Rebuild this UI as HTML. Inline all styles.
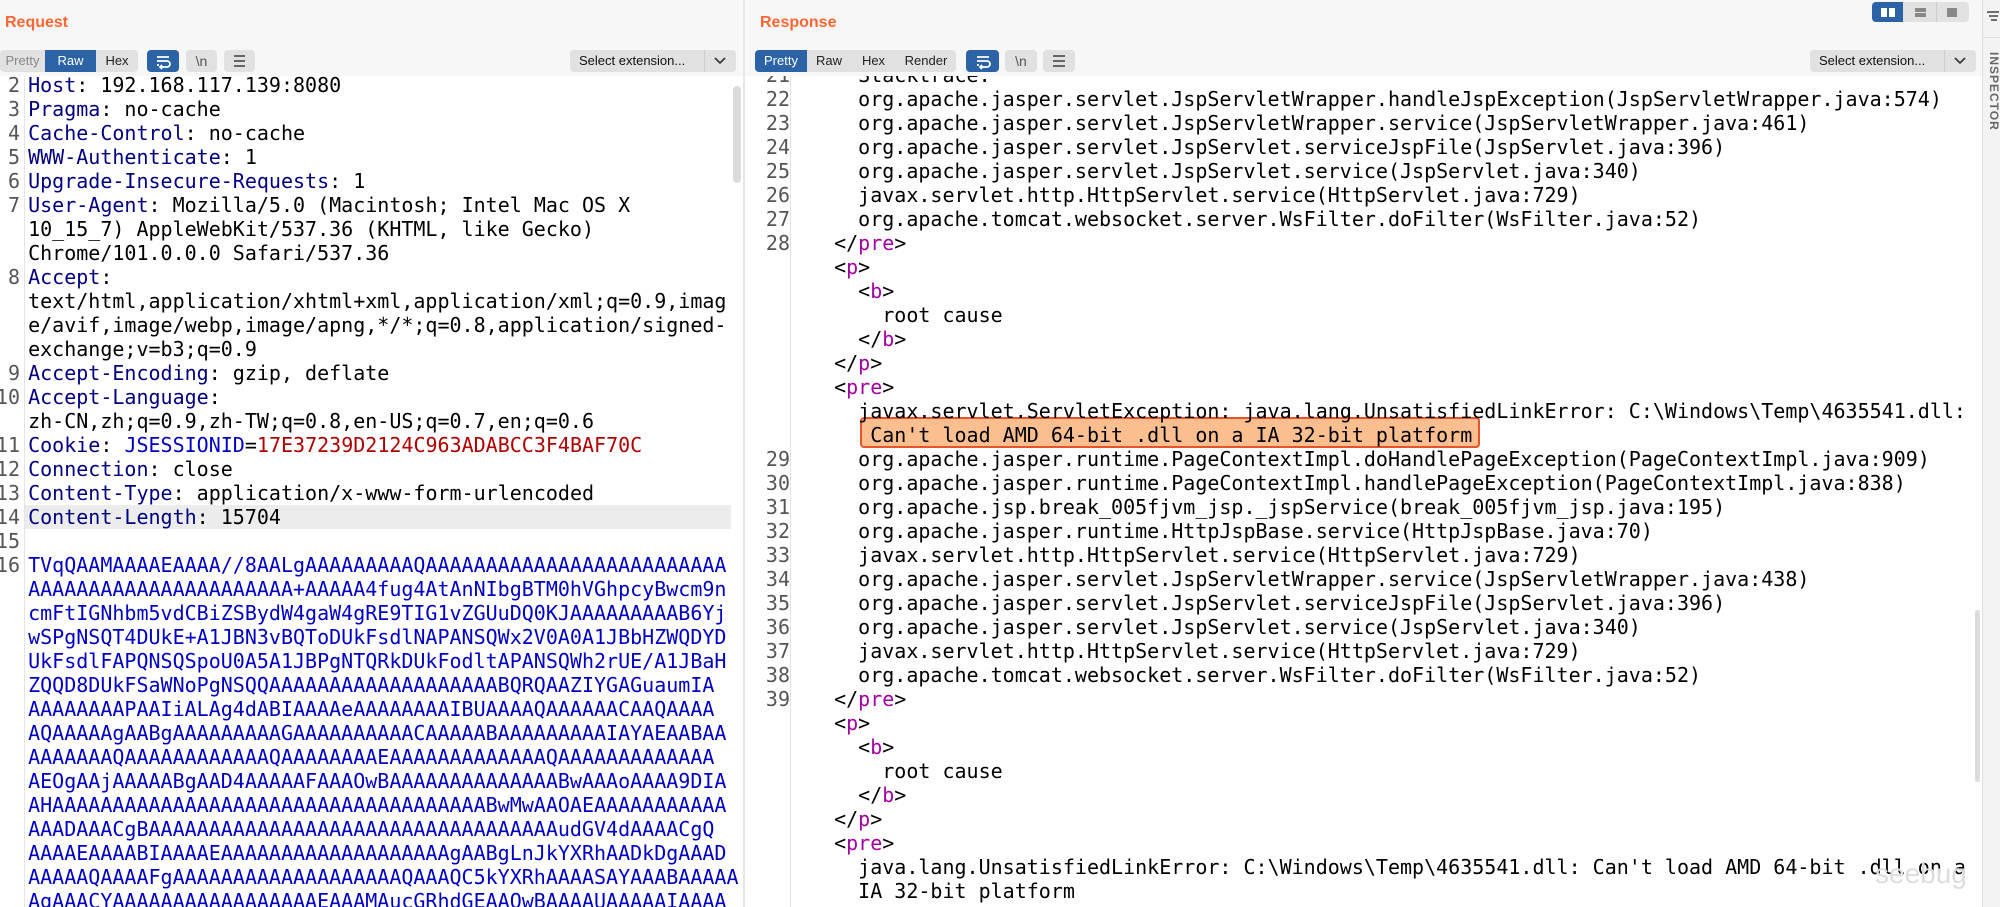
<!DOCTYPE html>
<html><head><meta charset="utf-8"><style>
*{margin:0;padding:0;box-sizing:border-box}
body{width:2000px;height:907px;overflow:hidden;background:#f7f7f7;position:relative;font-family:"Liberation Sans",sans-serif}
.hdr{position:absolute;top:14px;color:#ff6633;font-size:16px;font-weight:bold}
.btn{position:absolute;top:50px;height:22px;font-size:13px;line-height:22px;text-align:center;color:#222;background:#e1e1e1}
.sel{background:#2b63a6;color:#fff}
.ib{position:absolute;top:50px;height:22px;border-radius:4px;background:#e1e1e1}
.ib.sel{background:#2b63a6}
.ext{position:absolute;top:50px;height:22px;background:#e1e1e1;border-radius:4px;font-size:13px;line-height:22px;color:#111}
.ed{position:absolute;top:76px;height:831px;background:#fff;overflow:hidden}
.code{position:absolute;right:0;font-family:"DejaVu Sans Mono","Liberation Mono",monospace;font-size:20px;line-height:24px}
.r{height:24px;position:relative;white-space:pre}
.n{position:absolute;color:#555;text-align:right}
.k{color:#000080}.b{color:#0000c4}.red{color:#b00000}.t{color:#a400a4}
</style></head><body>

<div class="hdr" style="left:5px">Request</div>
<div class="btn" style="left:0;width:45px;color:#888;border-radius:4px 0 0 4px">Pretty</div>
<div class="btn sel" style="left:45px;width:51px">Raw</div>
<div class="btn" style="left:96px;width:42px;border-radius:0 4px 4px 0">Hex</div>
<div class="ib sel" style="left:147px;width:32px"><svg width="32" height="22"><path d="M10 7h12M10 11h10a3 3 0 0 1 0 6h-6M10 15h2M15 15l-2 2 2 2" stroke="#fff" stroke-width="1.8" fill="none"/></svg></div>
<div class="ib" style="left:186px;width:31px;font-size:14px;line-height:22px;text-align:center;color:#555">\n</div>
<div class="ib" style="left:224px;width:31px"><svg width="31" height="22"><path d="M10 6h11M10 11h11M10 16h11" stroke="#666" stroke-width="2"/></svg></div>
<div class="ext" style="left:570px;width:166px"><span style="padding-left:9px">Select extension...</span><span style="position:absolute;left:134px;top:0;width:1px;height:22px;background:#ccc"></span><svg style="position:absolute;left:143px;top:6px" width="14" height="10"><path d="M2 2l5 5 5-5" stroke="#333" stroke-width="1.6" fill="none"/></svg></div>

<div class="ed" style="left:0;width:743px">
<div style="position:absolute;left:24px;top:0;width:1px;height:831px;background:#e4e4e4"></div>
<div style="position:absolute;left:25px;top:429px;width:706px;height:24px;background:#ececec"></div>
<div style="position:absolute;left:733px;top:10px;width:8px;height:97px;border-radius:4px;background:#dcdcdc"></div>
<div class="code" style="top:-3px;left:4px">
<div class="r"><span class="n" style="left:-44px;width:60px">2</span>  <span class="k">Host</span>: 192.168.117.139:8080</div>
<div class="r"><span class="n" style="left:-44px;width:60px">3</span>  <span class="k">Pragma</span>: no-cache</div>
<div class="r"><span class="n" style="left:-44px;width:60px">4</span>  <span class="k">Cache-Control</span>: no-cache</div>
<div class="r"><span class="n" style="left:-44px;width:60px">5</span>  <span class="k">WWW-Authenticate</span>: 1</div>
<div class="r"><span class="n" style="left:-44px;width:60px">6</span>  <span class="k">Upgrade-Insecure-Requests</span>: 1</div>
<div class="r"><span class="n" style="left:-44px;width:60px">7</span>  <span class="k">User-Agent</span>: Mozilla/5.0 (Macintosh; Intel Mac OS X</div>
<div class="r">  10_15_7) AppleWebKit/537.36 (KHTML, like Gecko)</div>
<div class="r">  Chrome/101.0.0.0 Safari/537.36</div>
<div class="r"><span class="n" style="left:-44px;width:60px">8</span>  <span class="k">Accept</span>:</div>
<div class="r">  text/html,application/xhtml+xml,application/xml;q=0.9,imag</div>
<div class="r">  e/avif,image/webp,image/apng,*/*;q=0.8,application/signed-</div>
<div class="r">  exchange;v=b3;q=0.9</div>
<div class="r"><span class="n" style="left:-44px;width:60px">9</span>  <span class="k">Accept-Encoding</span>: gzip, deflate</div>
<div class="r"><span class="n" style="left:-44px;width:60px">10</span>  <span class="k">Accept-Language</span>:</div>
<div class="r">  zh-CN,zh;q=0.9,zh-TW;q=0.8,en-US;q=0.7,en;q=0.6</div>
<div class="r"><span class="n" style="left:-44px;width:60px">11</span>  <span class="k">Cookie</span>: <span class="b">JSESSIONID</span>=<span class="red">17E37239D2124C963ADABCC3F4BAF70C</span></div>
<div class="r"><span class="n" style="left:-44px;width:60px">12</span>  <span class="k">Connection</span>: close</div>
<div class="r"><span class="n" style="left:-44px;width:60px">13</span>  <span class="k">Content-Type</span>: application/x-www-form-urlencoded</div>
<div class="r"><span class="n" style="left:-44px;width:60px">14</span>  <span class="k">Content-Length</span>: 15704</div>
<div class="r"><span class="n" style="left:-44px;width:60px">15</span></div>
<div class="b">
<div class="r"><span class="n" style="left:-44px;width:60px;color:#555">16</span>  TVqQAAMAAAAEAAAA//8AALgAAAAAAAAAQAAAAAAAAAAAAAAAAAAAAAAAAA</div>
<div class="r">  AAAAAAAAAAAAAAAAAAAAAA+AAAAA4fug4AtAnNIbgBTM0hVGhpcyBwcm9n</div>
<div class="r">  cmFtIGNhbm5vdCBiZSBydW4gaW4gRE9TIG1vZGUuDQ0KJAAAAAAAAAB6Yj</div>
<div class="r">  wSPgNSQT4DUkE+A1JBN3vBQToDUkFsdlNAPANSQWx2V0A0A1JBbHZWQDYD</div>
<div class="r">  UkFsdlFAPQNSQSpoU0A5A1JBPgNTQRkDUkFodltAPANSQWh2rUE/A1JBaH</div>
<div class="r">  ZQQD8DUkFSaWNoPgNSQQAAAAAAAAAAAAAAAAAAABQRQAAZIYGAGuaumIA</div>
<div class="r">  AAAAAAAAPAAIiALAg4dABIAAAAeAAAAAAAAIBUAAAAQAAAAAACAAQAAAA</div>
<div class="r">  AQAAAAAgAABgAAAAAAAAAGAAAAAAAAAACAAAAABAAAAAAAAAIAYAEAABAA</div>
<div class="r">  AAAAAAAQAAAAAAAAAAAAQAAAAAAAAEAAAAAAAAAAAAAQAAAAAAAAAAAAA</div>
<div class="r">  AEOgAAjAAAAABgAAD4AAAAAFAAAOwBAAAAAAAAAAAAAABwAAAoAAAA9DIA</div>
<div class="r">  AHAAAAAAAAAAAAAAAAAAAAAAAAAAAAAAAAAAAABwMwAAOAEAAAAAAAAAAA</div>
<div class="r">  AAADAAACgBAAAAAAAAAAAAAAAAAAAAAAAAAAAAAAAAAAudGV4dAAAACgQ</div>
<div class="r">  AAAAEAAAABIAAAAEAAAAAAAAAAAAAAAAAAAgAABgLnJkYXRhAADkDgAAAD</div>
<div class="r">  AAAAAQAAAAFgAAAAAAAAAAAAAAAAAAAQAAAQC5kYXRhAAAASAYAAABAAAAA</div>
<div class="r">  AgAAACYAAAAAAAAAAAAAAAAAEAAAMAucGRhdGEAAOwBAAAAUAAAAAIAAAA</div>
</div>
</div>
</div>
<div style="position:absolute;left:743px;top:0;width:2px;height:907px;background:#e6e6e6"></div>
<div style="position:absolute;left:741px;top:472px;color:#aaa;font-size:14px">⋮</div>

<div class="hdr" style="left:760px">Response</div>
<div class="btn sel" style="left:755px;width:52px;border-radius:4px 0 0 4px">Pretty</div>
<div class="btn" style="left:807px;width:44px">Raw</div>
<div class="btn" style="left:851px;width:45px">Hex</div>
<div class="btn" style="left:896px;width:60px;border-radius:0 4px 4px 0">Render</div>
<div class="ib sel" style="left:966px;width:33px"><svg width="33" height="22"><path d="M11 7h12M11 11h10a3 3 0 0 1 0 6h-6M11 15h2M16 15l-2 2 2 2" stroke="#fff" stroke-width="1.8" fill="none"/></svg></div>
<div class="ib" style="left:1005px;width:32px;font-size:14px;line-height:22px;text-align:center;color:#555">\n</div>
<div class="ib" style="left:1043px;width:32px"><svg width="32" height="22"><path d="M10 6h12M10 11h12M10 16h12" stroke="#666" stroke-width="2"/></svg></div>
<div class="ext" style="left:1810px;width:166px"><span style="padding-left:9px">Select extension...</span><span style="position:absolute;left:134px;top:0;width:1px;height:22px;background:#ccc"></span><svg style="position:absolute;left:143px;top:6px" width="14" height="10"><path d="M2 2l5 5 5-5" stroke="#333" stroke-width="1.6" fill="none"/></svg></div>
<div style="position:absolute;left:1872px;top:2px;width:97px;height:20px;border-radius:4px;background:#e1e1e1;overflow:hidden">
<div style="position:absolute;left:0;top:0;width:31px;height:20px;background:#2b63a6"></div>
<div style="position:absolute;left:9px;top:6px;width:6px;height:9px;background:#fff"></div><div style="position:absolute;left:17px;top:6px;width:6px;height:9px;background:#fff"></div>
<div style="position:absolute;left:43px;top:6px;width:11px;height:4px;background:#888"></div><div style="position:absolute;left:43px;top:11px;width:11px;height:4px;background:#888"></div>
<div style="position:absolute;left:64px;top:0;width:1px;height:20px;background:#ccc"></div>
<div style="position:absolute;left:75px;top:6px;width:10px;height:9px;background:#888"></div>
</div>

<div class="ed" style="left:745px;width:1237px">
<div style="position:absolute;left:45px;top:0;width:1px;height:831px;background:#e4e4e4"></div>
<div style="position:absolute;left:1230px;top:534px;width:5px;height:172px;border-radius:3px;background:#dcdcdc"></div>
<div style="position:absolute;left:115px;top:341px;width:620px;height:31px;background:#fbbf8f;border:2px solid #e8542a;border-radius:4px"></div>
<div class="code" style="top:-13px;left:65px">
<div class="r"><span class="n" style="left:-80px;width:60px">21</span>    Stacktrace:</div>
<div class="r"><span class="n" style="left:-80px;width:60px">22</span>    org.apache.jasper.servlet.JspServletWrapper.handleJspException(JspServletWrapper.java:574)</div>
<div class="r"><span class="n" style="left:-80px;width:60px">23</span>    org.apache.jasper.servlet.JspServletWrapper.service(JspServletWrapper.java:461)</div>
<div class="r"><span class="n" style="left:-80px;width:60px">24</span>    org.apache.jasper.servlet.JspServlet.serviceJspFile(JspServlet.java:396)</div>
<div class="r"><span class="n" style="left:-80px;width:60px">25</span>    org.apache.jasper.servlet.JspServlet.service(JspServlet.java:340)</div>
<div class="r"><span class="n" style="left:-80px;width:60px">26</span>    javax.servlet.http.HttpServlet.service(HttpServlet.java:729)</div>
<div class="r"><span class="n" style="left:-80px;width:60px">27</span>    org.apache.tomcat.websocket.server.WsFilter.doFilter(WsFilter.java:52)</div>
<div class="r"><span class="n" style="left:-80px;width:60px">28</span>  &lt;/<span class="t">pre</span>&gt;</div>
<div class="r">  &lt;<span class="t">p</span>&gt;</div>
<div class="r">    &lt;<span class="t">b</span>&gt;</div>
<div class="r">      root cause</div>
<div class="r">    &lt;/<span class="t">b</span>&gt;</div>
<div class="r">  &lt;/<span class="t">p</span>&gt;</div>
<div class="r">  &lt;<span class="t">pre</span>&gt;</div>
<div class="r">    javax.servlet.ServletException: java.lang.UnsatisfiedLinkError: C:\Windows\Temp\4635541.dll:</div>
<div class="r">     Can't load AMD 64-bit .dll on a IA 32-bit platform</div>
<div class="r"><span class="n" style="left:-80px;width:60px">29</span>    org.apache.jasper.runtime.PageContextImpl.doHandlePageException(PageContextImpl.java:909)</div>
<div class="r"><span class="n" style="left:-80px;width:60px">30</span>    org.apache.jasper.runtime.PageContextImpl.handlePageException(PageContextImpl.java:838)</div>
<div class="r"><span class="n" style="left:-80px;width:60px">31</span>    org.apache.jsp.break_005fjvm_jsp._jspService(break_005fjvm_jsp.java:195)</div>
<div class="r"><span class="n" style="left:-80px;width:60px">32</span>    org.apache.jasper.runtime.HttpJspBase.service(HttpJspBase.java:70)</div>
<div class="r"><span class="n" style="left:-80px;width:60px">33</span>    javax.servlet.http.HttpServlet.service(HttpServlet.java:729)</div>
<div class="r"><span class="n" style="left:-80px;width:60px">34</span>    org.apache.jasper.servlet.JspServletWrapper.service(JspServletWrapper.java:438)</div>
<div class="r"><span class="n" style="left:-80px;width:60px">35</span>    org.apache.jasper.servlet.JspServlet.serviceJspFile(JspServlet.java:396)</div>
<div class="r"><span class="n" style="left:-80px;width:60px">36</span>    org.apache.jasper.servlet.JspServlet.service(JspServlet.java:340)</div>
<div class="r"><span class="n" style="left:-80px;width:60px">37</span>    javax.servlet.http.HttpServlet.service(HttpServlet.java:729)</div>
<div class="r"><span class="n" style="left:-80px;width:60px">38</span>    org.apache.tomcat.websocket.server.WsFilter.doFilter(WsFilter.java:52)</div>
<div class="r"><span class="n" style="left:-80px;width:60px">39</span>  &lt;/<span class="t">pre</span>&gt;</div>
<div class="r">  &lt;<span class="t">p</span>&gt;</div>
<div class="r">    &lt;<span class="t">b</span>&gt;</div>
<div class="r">      root cause</div>
<div class="r">    &lt;/<span class="t">b</span>&gt;</div>
<div class="r">  &lt;/<span class="t">p</span>&gt;</div>
<div class="r">  &lt;<span class="t">pre</span>&gt;</div>
<div class="r">    java.lang.UnsatisfiedLinkError: C:\Windows\Temp\4635541.dll: Can't load AMD 64-bit .dll on a</div>
<div class="r">    IA 32-bit platform</div>
</div>
<div style="position:absolute;left:1130px;top:782px;color:#ddd;font-size:28px;font-family:'Liberation Sans',sans-serif">seebug</div>
</div>

<div style="position:absolute;left:1982px;top:0;width:18px;height:907px;background:#f3f3f3;border-left:1px solid #ddd">
<svg style="position:absolute;left:3px;top:9px" width="14" height="12"><path d="M1 3h12M3 7h9M5 11h6" stroke="#444" stroke-width="1.5"/></svg>
<div style="position:absolute;left:0;top:37px;width:18px;height:1px;background:#ddd"></div>
<div style="position:absolute;left:18px;top:52px;transform-origin:0 0;transform:rotate(90deg);font-size:12px;font-weight:bold;color:#666;letter-spacing:1px;white-space:nowrap">INSPECTOR</div>
</div>
</body></html>
